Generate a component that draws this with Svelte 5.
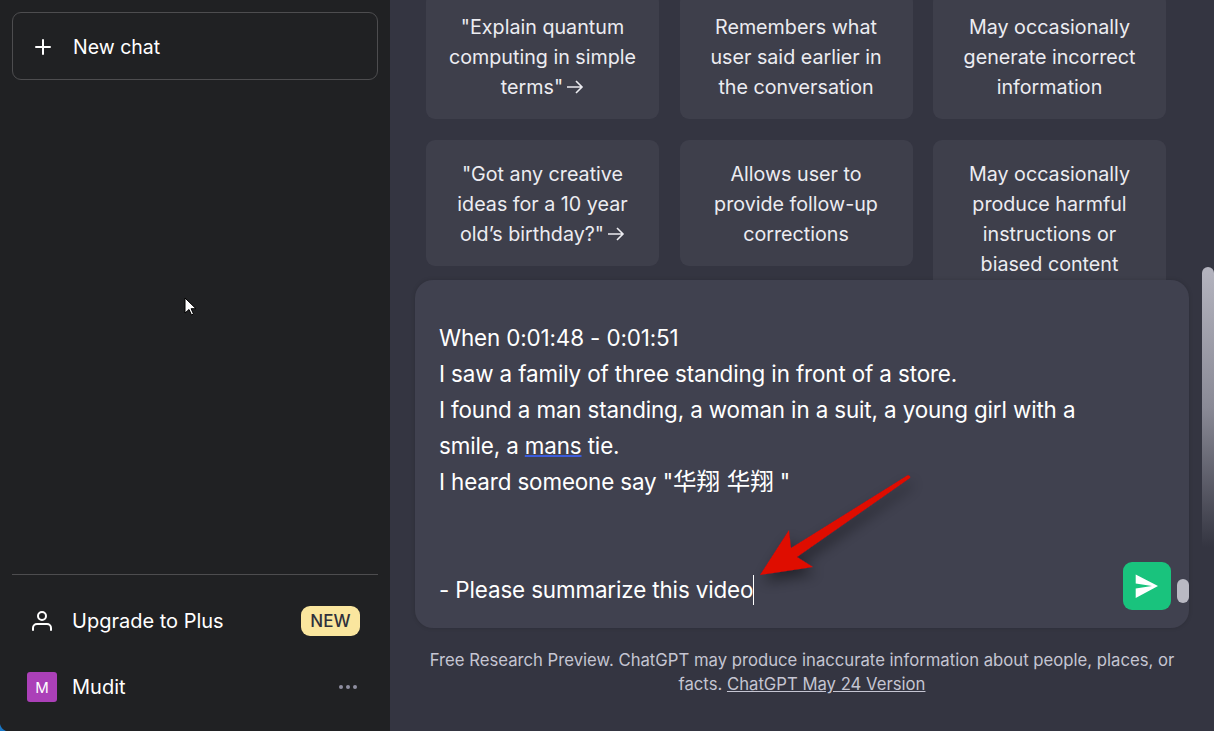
<script>
  const columns = [
    [
      { text: '"Explain quantum computing in simple terms"', arrow: true },
      { text: '"Got any creative ideas for a 10 year old’s birthday?"', arrow: true }
    ],
    [
      { text: 'Remembers what user said earlier in the conversation' },
      { text: 'Allows user to provide follow-up corrections' }
    ],
    [
      { text: 'May occasionally generate incorrect information' },
      { text: 'May occasionally produce harmful instructions or biased content' }
    ]
  ];
</script>

<div class="page">
  <aside class="sidebar">
    <button class="new-chat">
      <svg width="24" height="24" viewBox="0 0 24 24" fill="none" stroke="#fff" stroke-width="2" stroke-linecap="round"><path d="M12 5v14M5 12h14" /></svg>
      <span>New chat</span>
    </button>
    <div class="spacer"></div>
    <div class="bottom">
      <div class="row">
        <svg width="24" height="24" viewBox="0 0 24 24" fill="none" stroke="#fff" stroke-width="2" stroke-linecap="round" stroke-linejoin="round"><path d="M21 21v-2a4 4 0 0 0-4-4H7a4 4 0 0 0-4 4v2" /><circle cx="12" cy="7" r="4" /></svg>
        <span class="label">Upgrade to Plus</span>
        <span class="badge">NEW</span>
      </div>
      <div class="row">
        <span class="avatar">M</span>
        <span class="label">Mudit</span>
        <span class="dots"><i></i><i></i><i></i></span>
      </div>
    </div>
  </aside>

  <main class="main">
    <div class="columns">
      {#each columns as col}
        <div class="col">
          {#each col as card}
            <div class="card">
              {card.text}{#if card.arrow}<svg class="arrow" width="18" height="18" viewBox="0 0 18 18" fill="none" stroke="currentColor" stroke-width="1.6"><path d="M1 9h15M10 3l6 6-6 6" /></svg>{/if}
            </div>
          {/each}
        </div>
      {/each}
    </div>

    <div class="scrollbar"></div>

    <div class="composer">
      <div class="input">
        <div>When 0:01:48 - 0:01:51</div>
        <div>I saw a family of three standing in front of a store.</div>
        <div>I found a man standing, a woman in a suit, a young girl with a smile, a <span class="spell">mans</span> tie.</div>
        <div>I heard someone say "<span class="cjk">华翔 华翔</span> "</div>
        <div class="blank"></div>
        <div class="blank"></div>
        <div>- Please summarize this video<span class="caret"></span></div>
      </div>
      <button class="send" aria-label="Send">
        <svg width="26" height="26" viewBox="0 0 26 26"><path d="M1.7 1.5 24 13 1.7 25V15.5L18 13 1.7 10.5Z" fill="#fff" /></svg>
      </button>
      <div class="input-thumb"></div>
    </div>

    <p class="footnote">Free Research Preview. ChatGPT may produce inaccurate information about people, places, or facts. <u>ChatGPT May 24 Version</u></p>
  </main>

  <svg class="pointer" width="14" height="20" viewBox="0 0 14 20"><path d="M1 1v15l4-3.5 2.5 5.5 2-1-2.4-5.3H12Z" fill="#fff" stroke="#000" stroke-width="1" /></svg>

  <svg class="red-arrow" width="170" height="115" viewBox="750 470 170 115">
    <defs>
      <filter id="shadow" x="-30%" y="-30%" width="160%" height="170%"><feDropShadow dx="3" dy="7" stdDeviation="7" flood-color="#000" flood-opacity="0.45" /></filter>
    </defs>
    <path d="M908 475Q911 476 910 478L797 557 813 567 760 575 789 530 791 548Z" fill="#df0804" filter="url(#shadow)" />
  </svg>

  <svg class="corner" width="7" height="7" viewBox="0 0 7 7"><path d="M0 0Q1 5 6 7H0Z" fill="#1a78c8" /></svg>
</div>

<style>
  :global(body) {
    margin: 0;
    background: #343541;
  }

  .page {
    display: flex;
    height: 731px;
    overflow: hidden;
    position: relative;
    font-family: Inter, "Noto Sans CJK SC", sans-serif;
  }

  .sidebar {
    width: 390px;
    flex: none;
    box-sizing: border-box;
    background: #202123;
    padding: 12px 12px 0;
    display: flex;
    flex-direction: column;
    color: #fff;
  }

  .new-chat {
    height: 68px;
    box-sizing: border-box;
    display: flex;
    align-items: center;
    gap: 18px;
    padding: 1px 18px 0;
    border: 1px solid #4d4d4f;
    border-radius: 9px;
    background: none;
    color: #fff;
    font: inherit;
    font-size: 19.5px;
  }

  .spacer {
    flex: 1;
  }

  .bottom {
    border-top: 1px solid #4d4d4f;
    padding: 13px 0 11px;
    display: flex;
    flex-direction: column;
  }

  .row {
    height: 66px;
    display: flex;
    align-items: center;
    gap: 18px;
    padding: 0 18px;
    font-size: 20px;
  }

  .label {
    flex: 1;
  }

  .badge {
    background: #fae69e;
    color: #2f303b;
    border-radius: 9px;
    padding: 0 9.5px;
    height: 30px;
    line-height: 30px;
    font-size: 17px;
    font-weight: 500;
  }

  .avatar {
    width: 30px;
    height: 30px;
    margin: 0 -3px;
    border-radius: 3px;
    background: #ab40b8;
    display: flex;
    align-items: center;
    justify-content: center;
    font-size: 15px;
  }

  .dots {
    display: flex;
    gap: 3px;
    margin-right: 3px;
  }

  .dots i {
    width: 4px;
    height: 4px;
    border-radius: 50%;
    background: #8e8ea0;
  }

  .main {
    flex: 1;
    position: relative;
    overflow: hidden;
    color: #ececf1;
  }

  .columns {
    display: flex;
    gap: 20.5px;
    margin: -7px 48px 0 36px;
    align-items: flex-start;
  }

  .col {
    flex: 1;
    display: flex;
    flex-direction: column;
    gap: 21px;
  }

  .card {
    background: #3e3f4b;
    border-radius: 9px;
    padding: 19px 18px 17px;
    text-align: center;
    font-size: 19.7px;
    line-height: 30px;
  }

  .arrow {
    vertical-align: -2px;
    margin-left: 3px;
  }

  .scrollbar {
    position: absolute;
    right: 0;
    top: 267px;
    width: 12px;
    height: 280px;
    border-radius: 6px 6px 0 0;
    background: linear-gradient(#b4b4bf 0%, #8a8a96 50%, #343541 100%);
  }

  .composer {
    position: absolute;
    left: 25px;
    top: 280px;
    width: 774px;
    height: 348px;
    box-sizing: border-box;
    background: #40414f;
    border-radius: 18px;
    box-shadow: 0 0 4px rgba(0, 0, 0, 0.15);
    padding: 40px 24px 0;
    overflow: hidden;
    color: #fff;
  }

  .input {
    width: 660px;
    font-size: 22.4px;
    line-height: 36px;
    letter-spacing: -0.13px;
  }

  .cjk {
    font-size: 23.5px;
    letter-spacing: 0;
  }

  .blank {
    height: 36px;
  }

  .spell {
    text-decoration: underline;
    text-decoration-color: #3b5bdb;
    text-decoration-thickness: 2px;
  }

  .caret {
    display: inline-block;
    width: 1px;
    height: 30px;
    background: #fff;
    vertical-align: -7px;
  }

  .send {
    position: absolute;
    left: 708px;
    top: 282px;
    width: 48px;
    height: 48px;
    padding: 0;
    border: none;
    border-radius: 9px;
    background: #19c37d;
    display: flex;
    align-items: center;
    justify-content: center;
  }

  .input-thumb {
    position: absolute;
    right: 0;
    top: 299px;
    width: 12px;
    height: 24px;
    border-radius: 6px;
    background: #b9b9c3;
  }

  .footnote {
    position: absolute;
    left: 25px;
    top: 648px;
    width: 774px;
    margin: 0;
    text-align: center;
    font-size: 16.7px;
    line-height: 24px;
    color: #c5c5d2;
  }

  .pointer {
    position: absolute;
    left: 184px;
    top: 297px;
  }

  .red-arrow {
    position: absolute;
    left: 750px;
    top: 470px;
    overflow: visible;
  }

  .corner {
    position: absolute;
    left: 0;
    bottom: 0;
  }
</style>
